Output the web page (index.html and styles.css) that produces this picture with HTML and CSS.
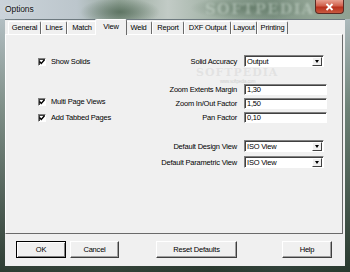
FILE: index.html
```html
<!DOCTYPE html>
<html lang="en">

<head>
    <meta charset="UTF-8">
    <title>Options</title>
    <link rel="stylesheet" href="styles.css">
</head>

<body>
    <div class="window">
        <div class="titlebar">
            <span class="title">Options</span>
            <span class="mark">SOFTPEDIA</span>
            <div class="close">
                <svg width="9" height="8" viewBox="0 0 9 8">
                    <path d="M1.5 1 L7.5 7 M7.5 1 L1.5 7" stroke="#fff" stroke-width="1.8" />
                </svg>
            </div>
        </div>

        <div class="client">
            <div class="tabs">
                <span class="tab w-general">General</span>
                <span class="tab w-lines">Lines</span>
                <span class="tab w-match">Match</span>
                <span class="tab tab-active w-view">View</span>
                <span class="tab w-weld">Weld</span>
                <span class="tab w-report">Report</span>
                <span class="tab w-dxf">DXF Output</span>
                <span class="tab w-layout">Layout</span>
                <span class="tab w-printing">Printing</span>
            </div>

            <div class="panel">
                <div class="checks">
                    <label class="check first"><span class="box"><svg width="6" height="6" viewBox="0 0 6 6"><path d="M0.5 2.5 L2.3 4.5 L5.5 0.8" stroke="#000" stroke-width="1.4" fill="none" /></svg></span>Show Solids</label>
                    <label class="check multi"><span class="box"><svg width="6" height="6" viewBox="0 0 6 6"><path d="M0.5 2.5 L2.3 4.5 L5.5 0.8" stroke="#000" stroke-width="1.4" fill="none" /></svg></span>Multi Page Views</label>
                    <label class="check tabbed"><span class="box"><svg width="6" height="6" viewBox="0 0 6 6"><path d="M0.5 2.5 L2.3 4.5 L5.5 0.8" stroke="#000" stroke-width="1.4" fill="none" /></svg></span>Add Tabbed Pages</label>
                </div>

                <div class="fields">
                    <div class="row row-accuracy">
                        <span class="label">Solid Accuracy</span>
                        <div class="combo"><span class="value">Output</span><span class="arrow"></span></div>
                    </div>
                    <div class="row row-margin">
                        <span class="label">Zoom Extents Margin</span>
                        <div class="edit">1,30</div>
                    </div>
                    <div class="row row-near">
                        <span class="label">Zoom In/Out Factor</span>
                        <div class="edit">1,50</div>
                    </div>
                    <div class="row row-near">
                        <span class="label">Pan Factor</span>
                        <div class="edit">0,10</div>
                    </div>
                    <div class="row row-design">
                        <span class="label">Default Design View</span>
                        <div class="combo"><span class="value">ISO View</span><span class="arrow"></span></div>
                    </div>
                    <div class="row row-param">
                        <span class="label">Default Parametric View</span>
                        <div class="combo"><span class="value">ISO View</span><span class="arrow"></span></div>
                    </div>
                </div>

                <span class="panel-mark">SOFTPEDIA</span>
                <span class="panel-url">www.softpedia.com</span>
            </div>

            <div class="buttons">
                <span class="btn btn-default">OK</span>
                <span class="btn btn-cancel">Cancel</span>
                <span class="btn btn-reset">Reset Defaults</span>
                <span class="btn btn-help">Help</span>
            </div>
        </div>
    </div>
</body>

</html>
```

FILE: styles.css
```css
body {
    margin: 0;
    font-family: 'Liberation Sans', Arial, sans-serif;
    font-size: 7.5px;
    letter-spacing: -0.2px;
    color: #000;
}

.window {
    width: 350px;
    height: 272px;
    box-sizing: border-box;
    padding: 0 5px 6px 5px;
    display: flex;
    flex-direction: column;
    background:
        linear-gradient(180deg, rgba(200, 210, 218, 0.9) 0%, rgba(150, 165, 160, 0.6) 40%, rgba(40, 55, 45, 0.9) 100%),
        linear-gradient(90deg, #5b6d62 0%, #8a9a90 30%, #2f4438 60%, #6f8a96 80%, #2e4a35 100%);
    overflow: hidden;
}

/* title bar */

.titlebar {
    height: 19px;
    margin: 0 -5px;
    padding: 0 6px 0 5px;
    display: flex;
    align-items: flex-start;
    position: relative;
    background:
        radial-gradient(ellipse 40px 14px at 120px 12px, rgba(70, 95, 75, 0.7), transparent),
        radial-gradient(ellipse 60px 12px at 250px 8px, rgba(80, 105, 85, 0.6), transparent),
        linear-gradient(90deg, #cbd3da 0%, #bcc6cc 22%, #97a89c 34%, #c2cbc6 48%, #9fb0a3 62%, #7f9485 78%, #95a797 92%, #8fa192 100%);
}

.title {
    font-size: 8.5px;
    letter-spacing: -0.1px;
    line-height: 19px;
    color: #111;
    text-shadow: 0 0 3px #e8eef2;
}

.mark {
    position: absolute;
    left: 205px;
    top: 0;
    font-family: 'DejaVu Serif', serif;
    font-weight: bold;
    font-size: 15px;
    letter-spacing: 1px;
    color: rgba(235, 245, 238, 0.35);
    filter: blur(1px);
}

.close {
    margin-left: auto;
    width: 29px;
    height: 14px;
    box-sizing: border-box;
    border: 1px solid #5a2a24;
    border-top: none;
    border-radius: 0 0 4px 4px;
    background: linear-gradient(180deg, #e8a090 0%, #d0604c 45%, #b8301c 55%, #c85a40 100%);
    display: flex;
    align-items: center;
    justify-content: center;
    position: relative;
}

/* client area */

.client {
    flex: 1;
    background-color: #f0f0f0;
    display: flex;
    flex-direction: column;
    border-top: 1px solid #6e7a80;
}

.tabs {
    display: flex;
    height: 13px;
    padding: 1px 0 0 3px;
}

.tab {
    flex: none;
    height: 13px;
    box-sizing: border-box;
    border-top: 1px solid #fff;
    border-left: 1px solid #fff;
    border-right: 1px solid #6a6a6a;
    border-radius: 2px 2px 0 0;
    text-align: center;
    line-height: 12px;
}

.tab-active {
    height: 16px;
    margin: -2px -2px -1px -2px;
    line-height: 13px;
    background-color: #f0f0f0;
    position: relative;
    z-index: 1;
}

.w-general { width: 33px; }
.w-lines { width: 26px; }
.w-match { width: 30px; }
.w-view { width: 32px; }
.w-weld { width: 27px; }
.w-report { width: 32px; }
.w-dxf { width: 47px; }
.w-layout { width: 26px; }
.w-printing { width: 31px; }

.panel {
    height: 200px;
    box-sizing: border-box;
    margin-right: 2px;
    border-top: 1px solid #fff;
    border-left: 1px solid #fff;
    border-right: 1px solid #6a6a6a;
    border-bottom: 1px solid #6a6a6a;
    display: flex;
    position: relative;
}

/* checkboxes */

.checks {
    width: 154px;
    padding: 21px 0 0 32px;
    box-sizing: border-box;
    display: flex;
    flex-direction: column;
}

.check {
    display: flex;
    align-items: center;
    height: 11px;
    gap: 5px;
}

.check.multi {
    margin-top: 29px;
}

.check.tabbed {
    margin-top: 5px;
}

.box {
    width: 8px;
    height: 8px;
    box-sizing: border-box;
    border-top: 1px solid #808080;
    border-left: 1px solid #808080;
    border-right: 1px solid #fff;
    border-bottom: 1px solid #fff;
    box-shadow: inset 1px 1px 0 #404040;
    background-color: #fff;
    display: flex;
    align-items: center;
    justify-content: center;
}

/* right column */

.fields {
    padding-top: 20px;
    display: flex;
    flex-direction: column;
}

.row {
    display: flex;
    align-items: center;
    gap: 7px;
}

.label {
    width: 77px;
    text-align: right;
    white-space: nowrap;
}

.row-margin { margin-top: 17px; }
.row-near { margin-top: 3px; }
.row-design { margin-top: 17px; }
.row-param { margin-top: 4px; }

.edit,
.combo {
    height: 11px;
    box-sizing: border-box;
    background-color: #fff;
    border-top: 1px solid #808080;
    border-left: 1px solid #808080;
    border-right: 1px solid #fff;
    border-bottom: 1px solid #fff;
    box-shadow: inset 1px 1px 0 #404040;
    padding-left: 2px;
    line-height: 9px;
}

.edit {
    width: 83px;
}

.combo {
    width: 80px;
    height: 12px;
    display: flex;
    align-items: center;
    padding-right: 1px;
}

.combo .value {
    flex: 1;
}

.arrow {
    width: 10px;
    height: 9px;
    box-sizing: border-box;
    background-color: #f0f0f0;
    border-top: 1px solid #fff;
    border-left: 1px solid #fff;
    border-right: 1px solid #404040;
    border-bottom: 1px solid #404040;
    display: flex;
    align-items: center;
    justify-content: center;
}

.arrow::after {
    content: "";
    border-left: 2.5px solid transparent;
    border-right: 2.5px solid transparent;
    border-top: 3px solid #000;
}

.panel-mark {
    position: absolute;
    left: 190px;
    top: 32px;
    font-family: 'DejaVu Serif', serif;
    font-weight: bold;
    font-size: 11px;
    line-height: 11px;
    letter-spacing: 1px;
    color: rgba(200, 200, 200, 0.35);
}

.panel-url {
    position: absolute;
    left: 214px;
    top: 44px;
    font-size: 4.5px;
    line-height: 5px;
    color: rgba(170, 170, 170, 0.5);
}

/* bottom buttons */

.buttons {
    display: flex;
    padding: 7px 13px 0 11px;
}

.btn {
    width: 50px;
    height: 17px;
    box-sizing: border-box;
    border-top: 1px solid #fff;
    border-left: 1px solid #fff;
    border-right: 1px solid #404040;
    border-bottom: 1px solid #404040;
    box-shadow: inset -1px -1px 0 #a0a0a0;
    text-align: center;
    line-height: 15px;
}

.btn-default {
    border: 1px solid #000;
    box-shadow: inset 1px 1px 0 #fff, inset -1px -1px 0 #808080;
}

.btn-cancel {
    width: 49px;
    margin-left: 4px;
}

.btn-reset {
    width: 81px;
    margin-left: 37px;
}

.btn-help {
    margin-left: auto;
}
```
